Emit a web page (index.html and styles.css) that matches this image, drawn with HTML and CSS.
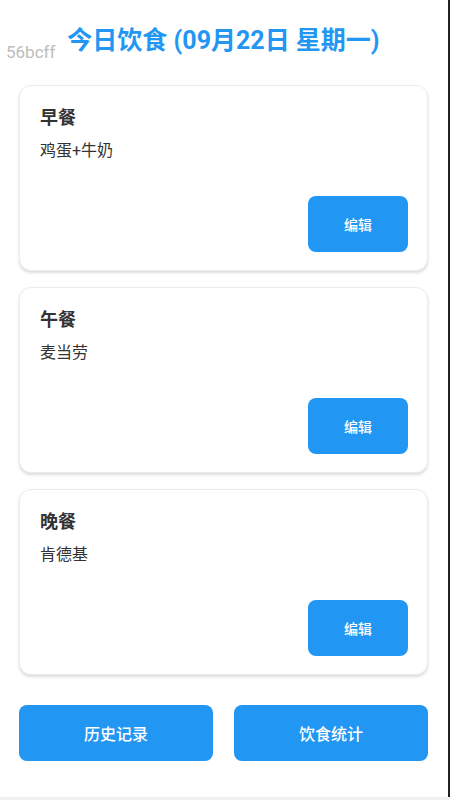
FILE: index.html
```html
<!DOCTYPE html>
<html lang="zh">
<head>
<meta charset="utf-8">
<link rel="stylesheet" href="styles.css">
</head>
<body>
<div class="page">
  <header class="header">
    <span class="tag">56bcff</span>
    <h1 class="title">今日饮食 (09月22日 星期一)</h1>
  </header>
  <section class="card">
    <div class="meal">早餐</div>
    <div class="food">鸡蛋+牛奶</div>
    <div class="actions"><button class="btn-edit">编辑</button></div>
  </section>
  <section class="card">
    <div class="meal">午餐</div>
    <div class="food">麦当劳</div>
    <div class="actions"><button class="btn-edit">编辑</button></div>
  </section>
  <section class="card">
    <div class="meal">晚餐</div>
    <div class="food">肯德基</div>
    <div class="actions"><button class="btn-edit">编辑</button></div>
  </section>
  <div class="footer">
    <button class="btn-big">历史记录</button>
    <button class="btn-big">饮食统计</button>
  </div>
</div>
<div class="bottom-bar"></div>
</body>
</html>
```
FILE: styles.css
```css
html, body {
  margin: 0;
  padding: 0;
  background: #ffffff;
  font-family: Roboto, "Noto Sans CJK SC", sans-serif;
}
.page {
  width: 450px;
  height: 797px;
  border-right: 2px solid #222;
  padding: 0 20px 0 19px;
  box-sizing: border-box;
  position: relative;
}
.header {
  height: 85px;
  display: flex;
  align-items: flex-start;
  justify-content: center;
  position: relative;
}
.tag {
  position: absolute;
  left: -13px;
  top: 42px;
  font-size: 17px;
  line-height: 20px;
  color: #bdbdbd;
}
.title {
  margin: 26px 0 0 0;
  font-size: 25px;
  line-height: 30px;
  font-weight: bold;
  color: #2196f3;
}
.card {
  border: 1px solid #ececec;
  border-radius: 12px;
  box-shadow: 0 2px 3px rgba(0, 0, 0, 0.14);
  padding: 20px 20px 18px 20px;
  margin-bottom: 16px;
  background: #fff;
}
.meal {
  font-size: 18px;
  line-height: 24px;
  font-weight: bold;
  color: #333;
}
.food {
  margin-top: 10px;
  font-size: 16px;
  line-height: 22px;
  color: #333;
}
.actions {
  margin-top: 34px;
  display: flex;
  justify-content: flex-end;
}
.btn-edit {
  width: 100px;
  height: 56px;
  margin-right: -1px;
  border: none;
  border-radius: 8px;
  background: #2196f3;
  color: #fff;
  font-family: Roboto, "Noto Sans CJK SC", sans-serif;
  font-size: 14px;
  font-weight: 500;
}
.footer {
  display: flex;
  gap: 21px;
  margin-top: 30px;
}
.btn-big {
  flex: 1;
  height: 56px;
  border: none;
  border-radius: 8px;
  background: #2196f3;
  color: #fff;
  font-family: Roboto, "Noto Sans CJK SC", sans-serif;
  font-size: 16px;
  font-weight: 500;
}
.bottom-bar {
  height: 3px;
  background: #f0f0f0;
  width: 450px;
}
```
